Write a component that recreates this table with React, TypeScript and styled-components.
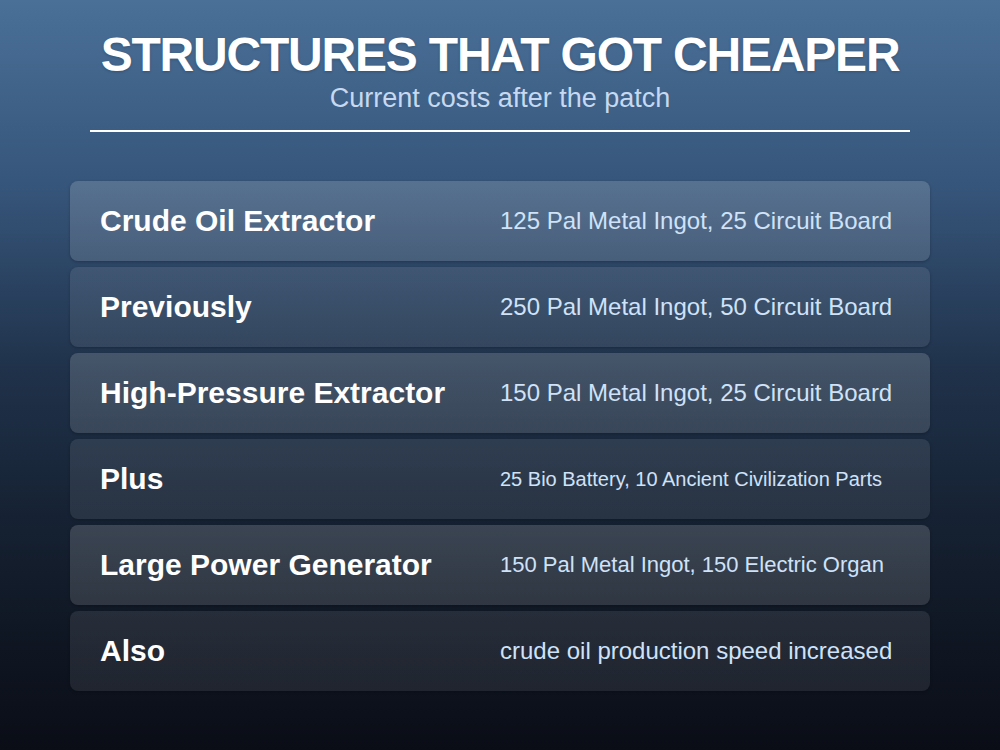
import React from "react";
import styled, { createGlobalStyle } from "styled-components";

const rows = [
  { label: "Crude Oil Extractor", value: "125 Pal Metal Ingot, 25 Circuit Board", size: 24 },
  { label: "Previously", value: "250 Pal Metal Ingot, 50 Circuit Board", size: 24 },
  { label: "High-Pressure Extractor", value: "150 Pal Metal Ingot, 25 Circuit Board", size: 24 },
  { label: "Plus", value: "25 Bio Battery, 10 Ancient Civilization Parts", size: 20 },
  { label: "Large Power Generator", value: "150 Pal Metal Ingot, 150 Electric Organ", size: 22 },
  { label: "Also", value: "crude oil production speed increased", size: 24 },
];

function App() {
  return (
    <>
      <GlobalStyle />
      <Page>
        <Header>
          <Title>STRUCTURES THAT GOT CHEAPER</Title>
          <Subtitle>Current costs after the patch</Subtitle>
        </Header>
        <Divider />
        <List>
          {rows.map((row, i) => (
            <Row key={row.label} $highlight={i % 2 === 0}>
              <Label>{row.label}</Label>
              <Value $size={row.size}>{row.value}</Value>
            </Row>
          ))}
        </List>
      </Page>
    </>
  );
}

export default App;

const GlobalStyle = createGlobalStyle`
  * {
    box-sizing: border-box;
  }
  body {
    margin: 0;
    font-family: "Liberation Sans", Arial, sans-serif;
  }
`;

const Page = styled.div`
  width: 1000px;
  height: 750px;
  overflow: hidden;
  font-family: "Liberation Sans", Arial, sans-serif;
  background: linear-gradient(
    180deg,
    #4a7098 0%,
    #36557a 25%,
    #1f3149 50%,
    #131d2c 75%,
    #0a0d16 100%
  );
  padding: 29px 70px 0;
  display: flex;
  flex-direction: column;
`;

const Header = styled.div`
  display: flex;
  flex-direction: column;
  align-items: center;
`;

const Title = styled.h1`
  margin: 0;
  font-size: 48px;
  line-height: 52px;
  letter-spacing: -1.2px;
  font-weight: 700;
  color: #ffffff;
  text-shadow: 0 1px 3px rgba(0, 0, 0, 0.2);
`;

const Subtitle = styled.div`
  margin-top: 3px;
  font-size: 27px;
  line-height: 28px;
  color: #c6d9f0;
`;

const Divider = styled.div`
  height: 2px;
  background: #ffffff;
  margin: 18px 20px 49px;
`;

const List = styled.div`
  display: flex;
  flex-direction: column;
  gap: 6px;
`;

const Row = styled.div<{ $highlight: boolean }>`
  height: 80px;
  border-radius: 8px;
  padding: 0 30px;
  display: grid;
  grid-template-columns: minmax(0, 1fr) minmax(0, 1fr);
  align-items: center;
  background: ${(p) =>
    p.$highlight
      ? "linear-gradient(180deg, rgba(255,255,255,0.16), rgba(255,255,255,0.13))"
      : "linear-gradient(180deg, rgba(255,255,255,0.09), rgba(255,255,255,0.08))"};
  box-shadow: 0 1px 3px rgba(0, 0, 0, 0.25);
`;

const Label = styled.div`
  font-size: 30px;
  font-weight: 700;
  color: #ffffff;
  white-space: nowrap;
`;

const Value = styled.div<{ $size: number }>`
  font-size: ${(p) => p.$size}px;
  color: #cfe2f8;
  white-space: nowrap;
`;
